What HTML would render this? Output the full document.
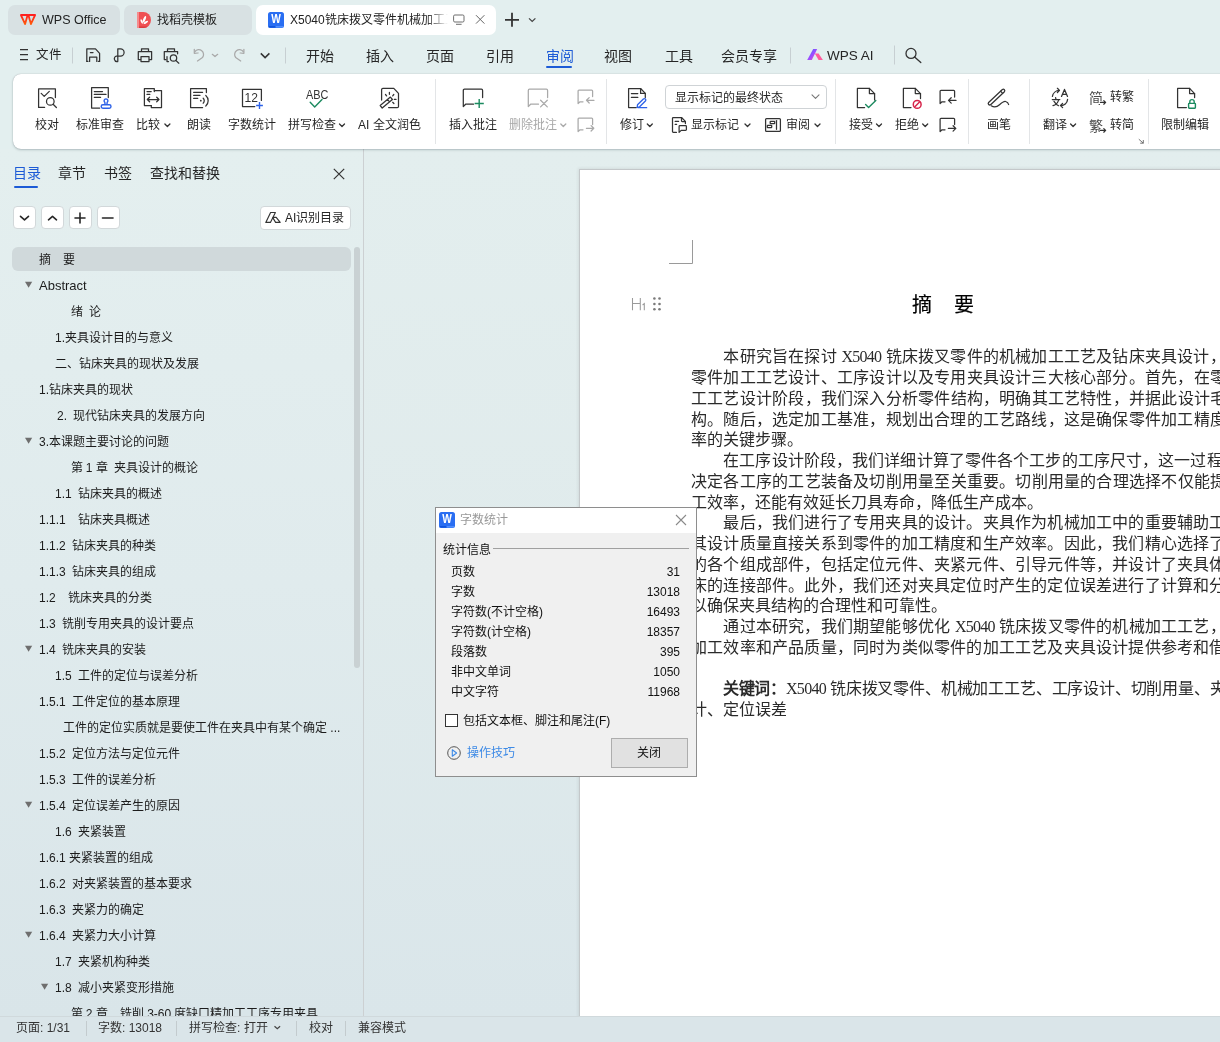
<!DOCTYPE html>
<html lang="zh-CN">
<head>
<meta charset="utf-8">
<style>
*{box-sizing:border-box;margin:0;padding:0}
html,body{width:1220px;height:1042px;overflow:hidden}
body{position:relative;will-change:transform;background:#e3efef;font-family:"Liberation Sans",sans-serif;color:#222;font-size:12px}
.a{position:absolute;white-space:nowrap}
.tab{position:absolute;top:5px;height:30px;border-radius:7px;background:#d8e1e3}
.tabt{position:absolute;top:5px;line-height:30px;font-size:12px;color:#222;white-space:nowrap}
.mi{position:absolute;top:41px;line-height:31px;font-size:14px;color:#262626;white-space:nowrap}
#ribbon{position:absolute;left:13px;top:74px;width:1240px;height:75px;background:#fff;border-radius:8px;box-shadow:0 1px 2.5px rgba(0,30,40,.22),0 0 1px rgba(0,20,30,.32)}
.rl{position:absolute;top:116px;line-height:18px;font-size:12px;color:#262626;white-space:nowrap}
.gr{color:#a8a8a8}
.sep{position:absolute;top:79px;width:1px;height:65px;background:#e3e5e7}
#nav{position:absolute;left:0;top:149px;width:363px;height:867px;background:linear-gradient(180deg,#e4efef 0%,#e0ebed 50%,#d9e5e9 100%)}
.toc{position:absolute;line-height:26px;font-size:12px;color:#1c1c1c;white-space:nowrap}
.nb{position:absolute;top:206px;width:23px;height:23px;background:#fff;border:1px solid #d2d8da;border-radius:4px}
#doc{position:absolute;left:364px;top:149px;width:856px;height:867px;background:linear-gradient(180deg,#e3eeee 0%,#e0ebec 50%,#dae6ea 100%)}
#page{position:absolute;left:579px;top:169px;width:700px;height:900px;background:#fff;border-left:1px solid #c4c8ca;border-top:1px solid #c4c8ca;box-shadow:-1px -1px 3px rgba(0,0,0,.07)}
.ln{position:absolute;left:691px;font-family:"Liberation Serif",serif;font-size:16px;line-height:20px;color:#2a2a2a;white-space:nowrap}
.lx{letter-spacing:-0.75px;margin-left:0.5px}
.lx0{letter-spacing:-0.7px}
#dlg{position:absolute;left:435px;top:507px;width:262px;height:270px;background:#f0f0f0;border:1px solid #8e8e8e}
.dr{position:absolute;left:451px;font-size:12px;line-height:20px;color:#111;white-space:nowrap}
.dn{position:absolute;left:600px;width:80px;font-size:12px;line-height:20px;color:#111;text-align:right}
#status{position:absolute;left:0;top:1016px;width:1220px;height:26px;background:#dae5e9;border-top:1px solid #d0d9dc}
.st{position:absolute;top:1016px;line-height:25px;font-size:12px;color:#333;white-space:nowrap}
.ssep{position:absolute;top:1021px;width:1px;height:15px;background:#c3cbce}
svg.ov{position:absolute;left:0;top:0;width:1220px;height:1042px;overflow:visible}
.k{fill:none;stroke:#333;stroke-width:1.25;stroke-linecap:round;stroke-linejoin:round}
.g{fill:none;stroke:#a9a9a9;stroke-width:1.25;stroke-linecap:round;stroke-linejoin:round}
</style>
</head>
<body>
<!-- TAB BAR -->
<div class="tab" style="left:8px;width:112px"></div>
<div class="tab" style="left:124px;width:128px"></div>
<div class="tab" style="left:256px;width:240px;background:#fff"></div>
<div class="tabt" style="left:42px;font-size:12.5px">WPS Office</div>
<div class="tabt" style="left:157px">找稻壳模板</div>
<div class="tabt" style="left:290px;width:160px;overflow:hidden;-webkit-mask-image:linear-gradient(90deg,#000 0,#000 136px,transparent 158px)">X5040铣床拨叉零件机械加工工序专用夹具设计</div>
<svg class="ov" viewBox="0 0 1220 1042">
 <!-- WPS logo -->
 <defs>
  <linearGradient id="wg" x1="0" y1="0" x2="0" y2="1"><stop offset="0" stop-color="#ff1f1f"/><stop offset="1" stop-color="#ff5a0a"/></linearGradient>
  <linearGradient id="aig" x1="0" y1="0" x2="1" y2="1"><stop offset="0" stop-color="#3b6cff"/><stop offset=".55" stop-color="#a24bff"/><stop offset="1" stop-color="#ff5c8a"/></linearGradient>
 </defs>
 <path d="M20.9,15 L27.6,15 L25.1,24.1 Z M28.4,15 L35.1,15 L30.9,24.1 Z" fill="none" stroke="url(#wg)" stroke-width="1.8" stroke-linejoin="round"/>
 <!-- docer logo -->
 <path d="M137,12 L143.4,12 A7.6,8 0 0 1 143.4,28 L137,28 Z" fill="#ef5053"/>
 <clipPath id="dcl"><path d="M137,12 L143.4,12 A7.6,8 0 0 1 143.4,28 L137,28 Z"/></clipPath><rect x="137" y="26.5" width="15" height="2" fill="#dc3b3e" clip-path="url(#dcl)"/>
 <rect x="137" y="12" width="2" height="16" fill="#f68b8d"/>
 <ellipse cx="141.7" cy="21.5" rx="0.95" ry="2.3" transform="rotate(-22 141.7 21.5)" fill="#fff"/>
 <ellipse cx="144.4" cy="19.3" rx="1.15" ry="3.5" transform="rotate(22 144.4 19.3)" fill="#fff"/>
 <ellipse cx="145.8" cy="22.4" rx="1" ry="2.6" transform="rotate(58 145.8 22.4)" fill="#fff"/>
 <!-- W doc icon -->
 <rect x="268" y="12" width="16" height="16" rx="2.5" fill="#2a6ef2"/>
 <text x="276" y="23.2" font-family="Liberation Sans" font-weight="bold" font-size="12.5" fill="#fff" text-anchor="middle" textLength="9.6" lengthAdjust="spacingAndGlyphs">W</text>
 <rect x="268.6" y="26.2" width="7" height="1.3" fill="#0a4fd8"/>
 <rect x="275.6" y="26.2" width="7.6" height="1.3" fill="#5a97ff"/>
 <!-- monitor -->
 <rect x="453.6" y="15" width="10.4" height="7" rx="1.2" fill="none" stroke="#666" stroke-width="0.95"/>
 <path d="M456,24.3 L461.6,24.3" stroke="#666" stroke-width="0.95"/>
 <!-- close -->
 <path d="M476,15.2 L484.4,23.6 M484.4,15.2 L476,23.6" stroke="#666" stroke-width="1"/>
 <!-- plus -->
 <path d="M505,19.8 L519,19.8 M512,12.8 L512,26.8" stroke="#333" stroke-width="1.8"/>
 <path d="M529,18.4 L532.2,21.4 L535.4,18.4" fill="none" stroke="#444" stroke-width="1.3"/>

 <!-- menu row -->
 <path d="M20,49.6 L28,49.6 M20,54.6 L28,54.6 M20,59.6 L28,59.6" stroke="#333" stroke-width="1.1"/>
 <path d="M72.5,47.5 L72.5,63.5" stroke="#c7cfd2" stroke-width="1"/>
 <!-- save -->
 <path d="M86.8,61.3 L86.8,48.8 L95.5,48.8 L99.6,53.3 L99.6,61.3" class="k" stroke-width="1.3"/>
 <path d="M89.6,61.4 L89.6,57.2 L96.8,57.2 L96.8,61.4 M86.8,61.3 L88,61.3 M98.4,61.3 L99.6,61.3" class="k" stroke-width="1.3"/>
 <path d="M90.4,52.5 L93,52.5" class="k" stroke-width="1.3"/>
 <!-- share -->
 <path d="M117.8,61.5 L117.8,48.8 L120.5,48.8 A3.6,3.6 0 0 1 120.5,56 L116.5,56 A2.7,2.7 0 1 0 117.8,61.5" class="k" stroke-width="1.3"/>
 <!-- print -->
 <path d="M141.5,51.2 L141.5,48.8 L148.5,48.8 L148.5,51.2" class="k" stroke-width="1.3"/>
 <path d="M140.5,59.5 L138.3,59.5 L138.3,51.5 L151.6,51.5 L151.6,59.5 L149.5,59.5" class="k" stroke-width="1.3"/>
 <path d="M141,56.5 L149,56.5 L149,61.5 L141,61.5 Z" class="k" stroke-width="1.3"/>
 <!-- print preview -->
 <path d="M167.5,51.2 L167.5,48.8 L174.5,48.8 L174.5,51.2" class="k" stroke-width="1.3"/>
 <path d="M166,59.5 L164.3,59.5 L164.3,51.5 L177.6,51.5 L177.6,53.8" class="k" stroke-width="1.3"/>
 <path d="M167,56.6 L167,61.5 L168.5,61.5" class="k" stroke-width="1.3"/>
 <circle cx="173.5" cy="58" r="3.2" class="k" stroke-width="1.3"/>
 <path d="M175.8,60.4 L178.8,63.2" class="k" stroke-width="1.3"/>
 <!-- undo/redo -->
 <path d="M195,51.5 A4.8,4.8 0 1 1 202.5,57.5 L197.5,61" class="g" stroke-width="1.2"/>
 <path d="M194.3,49.3 L194.3,53.3 L198,53" class="g" stroke-width="1.2"/>
 <path d="M212.3,54.3 L215,56.6 L217.7,54.3" class="g" stroke-width="1.2"/>
 <path d="M243.2,51.5 A4.8,4.8 0 1 0 235.7,57.5 L240.7,61" class="g" stroke-width="1.2"/>
 <path d="M243.9,49.3 L243.9,53.3 L240.2,53" class="g" stroke-width="1.2"/>
 <path d="M260.8,53.4 L265.1,57.6 L269.4,53.4" fill="none" stroke="#333" stroke-width="1.5"/>
 <path d="M285.5,47.5 L285.5,63.5" stroke="#c7cfd2" stroke-width="1"/>
 <path d="M790.5,47.5 L790.5,63.5" stroke="#c7cfd2" stroke-width="1"/>
 <path d="M894.5,45.5 L894.5,64.5" stroke="#c7cfd2" stroke-width="1"/>
 <!-- WPS AI logo -->
 <path d="M807.2,60 L813.2,49 L817.2,49 L811.8,60 Z" fill="url(#aig)"/>
 <path d="M814.8,53.5 L818.6,53.5 L822.9,60 L818.6,60 Z" fill="#ff5c9c"/>
 <!-- search -->
 <circle cx="911" cy="53.4" r="5" fill="none" stroke="#333" stroke-width="1.3"/>
 <path d="M914.6,57 L920.8,62.6" stroke="#333" stroke-width="1.3" stroke-linecap="round"/>
</svg>

<!-- MENU ROW -->
<div class="mi" style="left:36px;font-size:12.5px;top:40px">文件</div>
<div class="mi" style="left:306px">开始</div>
<div class="mi" style="left:366px">插入</div>
<div class="mi" style="left:426px">页面</div>
<div class="mi" style="left:486px">引用</div>
<div class="mi" style="left:546px;color:#1d5bd6">审阅</div>
<div class="a" style="left:546px;top:66px;width:26px;height:2.4px;background:#1d5bd6;border-radius:1px"></div>
<div class="mi" style="left:604px">视图</div>
<div class="mi" style="left:665px">工具</div>
<div class="mi" style="left:721px">会员专享</div>
<div class="mi" style="left:827px;font-size:13.5px;top:40px">WPS AI</div>
<!-- NAV -->
<div id="nav"></div>
<div class="a" style="left:363px;top:149px;width:1px;height:867px;background:#ccd0d2"></div>
<div class="a" style="left:364px;top:149px;width:1px;height:867px;background:#eef3f4"></div>
<div class="a" style="left:13px;top:163px;line-height:20px;font-size:14px;color:#1d5bd6">目录</div>
<div class="a" style="left:14px;top:186px;width:24px;height:2px;background:#1d5bd6;border-radius:1px"></div>
<div class="a" style="left:58px;top:163px;line-height:20px;font-size:14px;color:#262626">章节</div>
<div class="a" style="left:104px;top:163px;line-height:20px;font-size:14px;color:#262626">书签</div>
<div class="a" style="left:150px;top:163px;line-height:20px;font-size:14px;color:#262626">查找和替换</div>
<div class="nb" style="left:13px"></div>
<div class="nb" style="left:41px"></div>
<div class="nb" style="left:68.5px"></div>
<div class="nb" style="left:96.5px"></div>
<div class="a" style="left:259.5px;top:206px;width:91px;height:24px;background:#fff;border:1px solid #d2d8da;border-radius:4px"></div>
<div class="a" style="left:285px;top:208px;line-height:20px;font-size:12px;color:#262626">AI识别目录</div>
<div class="a" style="left:12px;top:247px;width:339px;height:23.5px;background:#d0d9db;border-radius:6px"></div>
<div class="a" style="left:354px;top:247px;width:6px;height:421px;background:#c9d1d3;border-radius:3px"></div>
<div class="toc" style="left:39px;top:247px">摘　要</div>
<div class="toc" style="left:39px;top:273px"><span style="font-size:13px">Abstract</span></div>
<div class="toc" style="left:70.5px;top:299px">绪&nbsp;&nbsp;论</div>
<div class="toc" style="left:55px;top:325px">1.夹具设计目的与意义</div>
<div class="toc" style="left:54.5px;top:351px">二、钻床夹具的现状及发展</div>
<div class="toc" style="left:39px;top:377px">1.钻床夹具的现状</div>
<div class="toc" style="left:57px;top:403px">2.</div>
<div class="toc" style="left:73.2px;top:403px">现代钻床夹具的发展方向</div>
<div class="toc" style="left:39px;top:429px">3.本课题主要讨论的问题</div>
<div class="toc" style="left:70.5px;top:455px">第 1 章</div>
<div class="toc" style="left:113.5px;top:455px">夹具设计的概论</div>
<div class="toc" style="left:55px;top:481px">1.1</div>
<div class="toc" style="left:77.9px;top:481px">钻床夹具的概述</div>
<div class="toc" style="left:39px;top:507px">1.1.1</div>
<div class="toc" style="left:78px;top:507px">钻床夹具概述</div>
<div class="toc" style="left:39px;top:533px">1.1.2</div>
<div class="toc" style="left:71.5px;top:533px">钻床夹具的种类</div>
<div class="toc" style="left:39px;top:559px">1.1.3</div>
<div class="toc" style="left:71.5px;top:559px">钻床夹具的组成</div>
<div class="toc" style="left:39px;top:585px">1.2</div>
<div class="toc" style="left:68.2px;top:585px">铣床夹具的分类</div>
<div class="toc" style="left:39px;top:611px">1.3</div>
<div class="toc" style="left:62.1px;top:611px">铣削专用夹具的设计要点</div>
<div class="toc" style="left:39px;top:637px">1.4</div>
<div class="toc" style="left:62.1px;top:637px">铣床夹具的安装</div>
<div class="toc" style="left:55px;top:663px">1.5</div>
<div class="toc" style="left:77.9px;top:663px">工件的定位与误差分析</div>
<div class="toc" style="left:39px;top:689px">1.5.1</div>
<div class="toc" style="left:71.5px;top:689px">工件定位的基本原理</div>
<div class="toc" style="left:63px;top:715px">工件的定位实质就是要使工件在夹具中有某个确定 ...</div>
<div class="toc" style="left:39px;top:741px">1.5.2</div>
<div class="toc" style="left:71.5px;top:741px">定位方法与定位元件</div>
<div class="toc" style="left:39px;top:767px">1.5.3</div>
<div class="toc" style="left:71.5px;top:767px">工件的误差分析</div>
<div class="toc" style="left:39px;top:793px">1.5.4</div>
<div class="toc" style="left:71.5px;top:793px">定位误差产生的原因</div>
<div class="toc" style="left:55px;top:819px">1.6</div>
<div class="toc" style="left:77.9px;top:819px">夹紧装置</div>
<div class="toc" style="left:39px;top:845px">1.6.1</div>
<div class="toc" style="left:69.2px;top:845px">夹紧装置的组成</div>
<div class="toc" style="left:39px;top:871px">1.6.2</div>
<div class="toc" style="left:71.9px;top:871px">对夹紧装置的基本要求</div>
<div class="toc" style="left:39px;top:897px">1.6.3</div>
<div class="toc" style="left:71.9px;top:897px">夹紧力的确定</div>
<div class="toc" style="left:39px;top:923px">1.6.4</div>
<div class="toc" style="left:71.9px;top:923px">夹紧力大小计算</div>
<div class="toc" style="left:55px;top:949px">1.7</div>
<div class="toc" style="left:78px;top:949px">夹紧机构种类</div>
<div class="toc" style="left:55px;top:975px">1.8</div>
<div class="toc" style="left:78px;top:975px">减小夹紧变形措施</div>
<div class="toc" style="left:70.5px;top:1001px">第 2 章</div>
<div class="toc" style="left:119.8px;top:1001px">铣削 3-60 度缺口精加工工序专用夹具</div>
<svg class="ov" viewBox="0 0 1220 1042">
<path d="M25,281.8 L32.2,281.8 L28.6,287.8 Z" fill="#6e6e6e"/>
<path d="M25,437.8 L32.2,437.8 L28.6,443.8 Z" fill="#6e6e6e"/>
<path d="M25,645.8 L32.2,645.8 L28.6,651.8 Z" fill="#6e6e6e"/>
<path d="M25,801.8 L32.2,801.8 L28.6,807.8 Z" fill="#6e6e6e"/>
<path d="M25,931.8 L32.2,931.8 L28.6,937.8 Z" fill="#6e6e6e"/>
<path d="M41,983.8 L48.2,983.8 L44.6,989.8 Z" fill="#6e6e6e"/>
<g fill="none" stroke="#262626" stroke-width="1.6" stroke-linecap="round" stroke-linejoin="round">
<path d="M20.5,216.3 L24.5,219.8 L28.5,216.3"/>
<path d="M48.5,219.8 L52.5,216.3 L56.5,219.8"/>
<path d="M75,218 L85,218 M80,213 L80,223"/>
<path d="M102.5,218 L113,218"/>
</g>
<path d="M333.8,168.8 L344.2,179.2 M344.2,168.8 L333.8,179.2" stroke="#333" stroke-width="1.2"/>
<path d="M265.8,222.4 L270.6,212.5 L275.4,212.5 L270.4,222.4 Z M272.6,217.4 L276.2,217.4 L280.2,222.4 L275.6,222.4 Z" fill="none" stroke="#333" stroke-width="1.15" stroke-linejoin="round"/>
</svg>
<!-- DOC -->
<div id="doc"></div>
<div id="page"></div>
<svg class="ov" viewBox="0 0 1220 1042">
<path d="M692.5,240 L692.5,263.5 L669,263.5" fill="none" stroke="#9a9a9a" stroke-width="1"/>
<path d="M632.5,298 L632.5,310.3 M640.3,298 L640.3,310.3 M632.5,303.5 L640.3,303.5 M642.6,305 L644.3,303.6 L644.3,310.3" fill="none" stroke="#9a9a9a" stroke-width="1.05"/>
<circle cx="654.4" cy="298.5" r="1.3" fill="#7a7a7a"/>
<circle cx="654.4" cy="304" r="1.3" fill="#7a7a7a"/>
<circle cx="654.4" cy="309.3" r="1.3" fill="#7a7a7a"/>
<circle cx="659.5" cy="298.5" r="1.3" fill="#7a7a7a"/>
<circle cx="659.5" cy="304" r="1.3" fill="#7a7a7a"/>
<circle cx="659.5" cy="309.3" r="1.3" fill="#7a7a7a"/>
</svg>
<div class="a" style="left:912px;top:293px;font-family:'Liberation Serif',serif;font-size:20px;line-height:24px;color:#000;-webkit-text-stroke:0.2px #000">摘</div>
<div class="a" style="left:954px;top:293px;font-family:'Liberation Serif',serif;font-size:20px;line-height:24px;color:#000;-webkit-text-stroke:0.2px #000">要</div>
<div class="ln" style="top:347.250px;letter-spacing:0.2px">　　本研究旨在探讨 <span class="lx">X5040</span> 铣床拨叉零件的机械加工工艺及钻床夹具设计，涵盖了</div>
<div class="ln" style="top:368.000px;letter-spacing:0.21px">零件加工工艺设计、工序设计以及专用夹具设计三大核心部分。首先，在零件加</div>
<div class="ln" style="top:388.750px;letter-spacing:0.22px">工工艺设计阶段，我们深入分析零件结构，明确其工艺特性，并据此设计毛坯结</div>
<div class="ln" style="top:409.500px;letter-spacing:0.21px">构。随后，选定加工基准，规划出合理的工艺路线，这是确保零件加工精度和效</div>
<div class="ln" style="top:430.250px;letter-spacing:0px">率的关键步骤。</div>
<div class="ln" style="top:451.000px;letter-spacing:0.11px">　　在工序设计阶段，我们详细计算了零件各个工步的工序尺寸，这一过程对于</div>
<div class="ln" style="top:471.750px;letter-spacing:0.22px">决定各工序的工艺装备及切削用量至关重要。切削用量的合理选择不仅能提高加</div>
<div class="ln" style="top:492.500px;letter-spacing:0px">工效率，还能有效延长刀具寿命，降低生产成本。</div>
<div class="ln" style="top:513.250px;letter-spacing:0.2px">　　最后，我们进行了专用夹具的设计。夹具作为机械加工中的重要辅助工具，</div>
<div class="ln" style="top:534.000px;letter-spacing:0.2px">其设计质量直接关系到零件的加工精度和生产效率。因此，我们精心选择了夹具</div>
<div class="ln" style="top:554.750px;letter-spacing:0.2px">的各个组成部件，包括定位元件、夹紧元件、引导元件等，并设计了夹具体与机</div>
<div class="ln" style="top:575.500px;letter-spacing:0.2px">床的连接部件。此外，我们还对夹具定位时产生的定位误差进行了计算和分析，</div>
<div class="ln" style="top:596.250px;letter-spacing:0px">以确保夹具结构的合理性和可靠性。</div>
<div class="ln" style="top:617.000px;letter-spacing:0.2px">　　通过本研究，我们期望能够优化 <span class="lx">X5040</span> 铣床拨叉零件的机械加工工艺，提高</div>
<div class="ln" style="top:637.750px;letter-spacing:0.2px">加工效率和产品质量，同时为类似零件的加工工艺及夹具设计提供参考和借鉴。</div>
<div class="ln" style="top:679.250px;letter-spacing:-0.17px">　　<b>关键词：</b><span class="lx0">X5040</span> 铣床拨叉零件、机械加工工艺、工序设计、切削用量、夹具设</div>
<div class="ln" style="top:700.000px;letter-spacing:0px">计、定位误差</div>
<!-- RIBBON -->
<div id="ribbon"></div>
<div class="sep" style="left:435px"></div>
<div class="sep" style="left:606px"></div>
<div class="sep" style="left:835px"></div>
<div class="sep" style="left:968px"></div>
<div class="sep" style="left:1029px"></div>
<div class="sep" style="left:1148px"></div>
<div class="rl" style="left:35px">校对</div>
<div class="rl" style="left:76px">标准审查</div>
<div class="rl" style="left:136px">比较</div>
<div class="rl" style="left:187px">朗读</div>
<div class="rl" style="left:228px">字数统计</div>
<div class="rl" style="left:288px">拼写检查</div>
<div class="rl" style="left:358px">AI 全文润色</div>
<div class="rl" style="left:449px">插入批注</div>
<div class="rl gr" style="left:509px">删除批注</div>
<div class="rl" style="left:620px">修订</div>
<div class="a" style="left:665px;top:85px;width:162px;height:24px;border:1px solid #cfd3d6;border-radius:4px;background:#fff"></div>
<div class="rl" style="left:675px;top:89px">显示标记的最终状态</div>
<div class="rl" style="left:691px">显示标记</div>
<div class="rl" style="left:786px">审阅</div>
<div class="rl" style="left:849px">接受</div>
<div class="rl" style="left:895px">拒绝</div>
<div class="rl" style="left:987px">画笔</div>
<div class="rl" style="left:1043px">翻译</div>
<div class="rl" style="left:1110px;top:88px">转繁</div>
<div class="rl" style="left:1110px">转简</div>
<div class="rl" style="left:1161px">限制编辑</div>
<svg class="ov" viewBox="0 0 1220 1042">
 <!-- chevrons -->
 <g fill="none" stroke="#333" stroke-width="1.3" stroke-linecap="round" stroke-linejoin="round">
  <path d="M164.9,124 L167.4,126.5 L169.9,124"/>
  <path d="M339.5,124 L342.0,126.5 L344.5,124"/>
  <path d="M647.3,124 L649.8,126.5 L652.3,124"/>
  <path d="M745.0,124 L747.5,126.5 L750.0,124"/>
  <path d="M815.0,124 L817.5,126.5 L820.0,124"/>
  <path d="M876.5,124 L879.0,126.5 L881.5,124"/>
  <path d="M922.7,124 L925.2,126.5 L927.7,124"/>
  <path d="M1070.6,124 L1073.1,126.5 L1075.6,124"/>
  <path d="M812,94.8 L815.5,98.3 L819,94.8" stroke="#777" stroke-width="1.1"/>
 </g>
 <path d="M560.8,124 L563.3,126.5 L565.8,124" fill="none" stroke="#aaa" stroke-width="1.3" stroke-linecap="round" stroke-linejoin="round"/>
 <!-- 校对 -->
 <g class="k">
  <path d="M44.6,107.4 L38.6,107.4 L38.6,88.8 L55.4,88.8 L55.4,97.6"/>
  <path d="M41.2,93.4 L44.2,96.4 L49.3,91.4"/>
  <circle cx="50.3" cy="101.4" r="3.8"/>
  <path d="M53.1,104.2 L56.4,107.5"/>
 </g>
 <!-- 标准审查 -->
 <g class="k">
  <path d="M99.7,108 L91.6,108 L91.6,87.6 L108.3,87.6 L108.3,97.6"/>
  <path d="M94.3,91.5 L102.5,91.5 M94.3,94.4 L106,94.4 M94.3,97.3 L100.6,97.3"/>
 </g>
 <g fill="none" stroke="#2d62e8" stroke-width="1.4" stroke-linejoin="round">
  <path d="M105.1,104.6 L104.8,102.2 A1.9,1.9 0 1 1 107.2,102.2 L106.9,104.6"/>
  <rect x="101.2" y="104.8" width="9.8" height="3.4" rx="1.7"/>
 </g>
 <!-- 比较 -->
 <g class="k">
  <path d="M151.3,105.6 L144.4,105.6 L144.4,88.5 L154.3,88.5 L154.3,91.6"/>
  <path d="M154.3,90.6 L161.5,90.6 L161.5,107.5 L151.3,107.5 L151.3,105.6"/>
  <path d="M147,91.5 L151.2,91.5 M147,94.4 L149.8,94.4"/>
  <path d="M147.3,99.5 L159,99.5 M149.6,97.2 L147.3,99.5 L149.6,101.8 M156.7,97.2 L159,99.5 L156.7,101.8"/>
 </g>
 <!-- 朗读 -->
 <g class="k">
  <path d="M202.6,107.5 L190.6,107.5 L190.6,88.5 L206.4,88.5 L206.4,92.6"/>
  <path d="M193.6,92.3 L202.6,92.3 M193.6,95.3 L200,95.3 M193.6,98.3 L197.8,98.3"/>
  <path d="M203.2,98.2 A3.5,3.5 0 0 1 203.2,103.2 M205.8,95.5 A7,7 0 0 1 205.8,106"/>
 </g>
 <circle cx="200.8" cy="100.7" r="0.9" fill="#333"/>
 <!-- 字数统计 -->
 <g class="k">
  <path d="M254.8,106.5 L242.5,106.5 L242.5,89.4 L261.4,89.4 L261.4,100.4"/>
 </g>
 <text x="244.6" y="102" font-family="Liberation Sans" font-size="12.5" fill="#333" textLength="13.4" lengthAdjust="spacingAndGlyphs">12</text>
 <path d="M256.1,105.5 L262.9,105.5 M259.5,102.1 L259.5,108.9" stroke="#2d62e8" stroke-width="1.4"/>
 <!-- ABC -->
 <text x="306" y="98.8" font-family="Liberation Sans" font-size="12.6" fill="#333" textLength="22.4" lengthAdjust="spacingAndGlyphs">ABC</text>
 <path d="M310.2,102.2 L314.7,107 L322,99.6" fill="none" stroke="#1b8a5f" stroke-width="1.4" stroke-linecap="round" stroke-linejoin="round"/>
 <!-- AI 全文润色 -->
 <g class="k">
  <path d="M381.6,100 L381.6,89.6 A1.3,1.3 0 0 1 382.9,88.4 L393.8,88.4 L398.5,93.4 L398.5,106.4 A1.2,1.2 0 0 1 397.3,107.6 L388.6,107.6"/>
  <path d="M380.2,105.6 L390.4,97.1 L392.4,99.5 L382.2,108 Z M387.5,99.45 L389.6,101.9"/>
  <path d="M389.4,92.4 L389.4,94.3 M385.5,94.5 L386.6,95.9 M393.8,94.5 L392.7,95.9 M394.3,99.4 L396,99.4 M392.7,102.3 L393.9,103.5"/>
 </g>
 <!-- 插入批注 -->
 <g class="k">
  <path d="M482.6,97.6 L482.6,90.4 A1.2,1.2 0 0 0 481.4,89.2 L464.5,89.2 A1.2,1.2 0 0 0 463.3,90.4 L463.3,106.6 L465.6,104.2 L473.5,104.2"/>
 </g>
 <path d="M474.6,103.5 L483.8,103.5 M479.2,98.9 L479.2,108.1" stroke="#1b8a5f" stroke-width="1.4"/>
 <!-- 删除批注 gray -->
 <g class="g">
  <path d="M547.6,97.6 L547.6,90.4 A1.2,1.2 0 0 0 546.4,89.2 L529.5,89.2 A1.2,1.2 0 0 0 528.3,90.4 L528.3,106.6 L530.6,104.2 L538.5,104.2"/>
  <path d="M540.6,100.2 L547.3,106.9 M547.3,100.2 L540.6,106.9"/>
 </g>
 <!-- prev/next small (gray) -->
 <g class="g" stroke-width="1.2">
  <path d="M592.6,96.5 L592.6,91 A0.9,0.9 0 0 0 591.7,90.1 L579,90.1 A0.9,0.9 0 0 0 578.1,91 L578.1,103.6 L580,101.8 L583,101.8"/>
  <path d="M586.6,100.3 L594,100.3 M589.2,97.6 L586.5,100.3 L589.2,103"/>
  <path d="M592.6,124.5 L592.6,119 A0.9,0.9 0 0 0 591.7,118.1 L579,118.1 A0.9,0.9 0 0 0 578.1,119 L578.1,131.6 L580,129.8 L583,129.8"/>
  <path d="M586.4,128.3 L593.8,128.3 M591.1,125.6 L593.8,128.3 L591.1,131"/>
 </g>
 <!-- 修订 -->
 <g class="k">
  <path d="M636.3,107.6 L628.6,107.6 L628.6,88.5 L640.6,88.5 L645.3,93.4 L645.3,97.6"/>
  <path d="M640.6,88.5 L640.6,93.4 L645.3,93.4"/>
  <path d="M631.4,93.6 L637.8,93.6 M631.4,97.4 L637.8,97.4"/>
 </g>
 <path d="M637.2,107.4 L637.5,104.8 L643.4,99 A1.35,1.35 0 0 1 645.4,101 L639.6,106.8 Z M637.5,107.6 L647.2,107.6" fill="none" stroke="#2d62e8" stroke-width="1.3" stroke-linejoin="round"/>
 <!-- 显示标记 icon -->
 <g class="k" stroke-width="1.15">
  <path d="M676.4,132.4 L673.3,132.4 A0.8,0.8 0 0 1 672.5,131.6 L672.5,118.3 A0.8,0.8 0 0 1 673.3,117.5 L681.5,117.5 L685.4,121.4 L685.4,123.5"/>
  <path d="M681.5,117.5 L681.5,120.8 A0.7,0.7 0 0 0 682.2,121.5 L685.2,121.5"/>
  <path d="M675.2,121.4 L678.6,121.4 M675.2,124.4 L676.6,124.4"/>
  <path d="M679.1,132.4 L679.1,126.4 A0.8,0.8 0 0 1 679.9,125.6 L685.6,125.6 A0.8,0.8 0 0 1 686.4,126.4 L686.4,129.6 A0.8,0.8 0 0 1 685.6,130.4 L681.2,130.4 Z"/>
 </g>
 <!-- 审阅 icon -->
 <g class="k" stroke-width="1.15">
  <rect x="765.6" y="118.5" width="14.8" height="12.9" rx="0.9"/>
  <rect x="770.2" y="121.3" width="4.5" height="2.3" rx="0.4"/>
  <rect x="767.3" y="125.3" width="4.4" height="2.3" rx="0.4"/>
  <path d="M776.5,120.6 L776.5,129.3"/>
 </g>
 <!-- 接受 -->
 <g class="k">
  <path d="M864.6,107.6 L857.4,107.6 L857.4,88.4 L869.4,88.4 L874.6,93.6 L874.6,100"/>
  <path d="M869.4,88.4 L869.4,93.6 L874.6,93.6"/>
 </g>
 <path d="M865.6,104.6 L868.6,107.6 L875.8,100.6" fill="none" stroke="#1b8a5f" stroke-width="1.4" stroke-linecap="round" stroke-linejoin="round"/>
 <!-- 拒绝 -->
 <g class="k">
  <path d="M911,107.6 L903.4,107.6 L903.4,88.4 L915.3,88.4 L920.5,93.6 L920.5,98.6"/>
  <path d="M915.3,88.4 L915.3,93.6 L920.5,93.6"/>
 </g>
 <circle cx="917.2" cy="104.4" r="3.9" fill="none" stroke="#d7244a" stroke-width="1.5"/>
 <path d="M914.6,107 L919.8,101.8" stroke="#d7244a" stroke-width="1.5"/>
 <!-- prev/next dark -->
 <g class="k" stroke-width="1.2">
  <path d="M954.6,97 L954.6,91.3 A0.9,0.9 0 0 0 953.7,90.4 L941,90.4 A0.9,0.9 0 0 0 940.1,91.3 L940.1,103.6 L942,101.8 L945,101.8"/>
  <path d="M948.6,100.4 L956,100.4 M951.2,97.7 L948.5,100.4 L951.2,103.1"/>
  <path d="M954.6,124.6 L954.6,119.3 A0.9,0.9 0 0 0 953.7,118.4 L941,118.4 A0.9,0.9 0 0 0 940.1,119.3 L940.1,131.6 L942,129.8 L945,129.8"/>
  <path d="M948.4,128.4 L955.8,128.4 M953.1,125.7 L955.8,128.4 L953.1,131.1"/>
 </g>
 <!-- 画笔 -->
 <g class="k" stroke-width="1.2">
  <path d="M988.6,102.5 L1002.4,89.5 A1.5,1.5 0 0 1 1004.4,91.7 L990.6,104.7 A1.5,1.5 0 0 1 988.6,102.5 Z"/>
  <path d="M1000.6,91.2 L1002.6,93.4"/>
  <path d="M991.2,105.8 C993.5,107.3 997,107.1 999.5,104.8 C1002,102.5 1003.6,101.1 1005.6,101.5 C1007.3,101.9 1008.4,103.5 1008.6,104.5"/>
 </g>
 <!-- 翻译 icon -->
 <g class="k" stroke-width="1.15">
  <path d="M1052.4,96.4 A7.2,7.2 0 0 1 1059.4,90.4 M1057.4,88.3 L1059.5,90.4 L1057.4,92.5"/>
  <path d="M1067.6,99.4 A6.6,6.6 0 0 1 1060.5,105.5 M1062.6,103.4 L1060.5,105.5 L1062.6,107.6"/>
  <path d="M1061.5,96.4 L1064.5,89.4 L1067.5,96.4 M1062.5,94.3 L1066.5,94.3"/>
  <path d="M1052.3,99.5 L1059.8,99.5 M1055.6,97.6 L1055.9,99.2 M1058.4,100.6 C1057.4,103.4 1055.6,105 1053,105.7 M1054,101.4 C1055.4,103.6 1057,105 1058.6,105.7"/>
 </g>
 <!-- 简/繁 icons -->
 <text x="1089.2" y="102.6" font-family="Liberation Sans" font-size="14" fill="#4a4a4a">简</text>
 <text x="1089.2" y="130.8" font-family="Liberation Sans" font-size="14" fill="#4a4a4a">繁</text>
 <rect x="1100" y="101" width="7" height="4" fill="#fff"/>
 <rect x="1100" y="129" width="7" height="4" fill="#fff"/>
 <g class="k" stroke-width="1.1">
  <path d="M1100.4,102.4 L1105.6,102.4 M1103.8,100.6 L1105.6,102.4 L1103.8,104.2"/>
  <path d="M1100.4,130.4 L1105.6,130.4 M1103.8,128.6 L1105.6,130.4 L1103.8,132.2"/>
 </g>
 <path d="M1138.8,139.2 L1143.3,143.2 M1143.3,140 L1143.3,143.2 L1140.2,143.2" fill="none" stroke="#666" stroke-width="0.9"/>
 <!-- 限制编辑 -->
 <g class="k">
  <path d="M1186.4,107.6 L1177.6,107.6 L1177.6,88.4 L1189.6,88.4 L1194.6,93.6 L1194.6,97.6"/>
  <path d="M1189.6,88.4 L1189.6,93.6 L1194.6,93.6"/>
 </g>
 <g fill="none" stroke="#1b8a5f" stroke-width="1.4">
  <path d="M1189.8,103 L1189.8,101.8 A2.2,2.2 0 0 1 1194.2,101.8 L1194.2,103"/>
  <rect x="1188.6" y="103.4" width="6.8" height="4.8" rx="0.6"/>
 </g>
</svg>
<!-- DIALOG -->
<div id="dlg"></div>
<div class="a" style="left:436px;top:508px;width:260px;height:25px;background:#fff"></div>
<div class="a" style="left:460px;top:509px;line-height:22px;font-size:12px;color:#999">字数统计</div>
<div class="a" style="left:443px;top:540px;line-height:20px;font-size:12px;color:#111">统计信息</div>
<div class="a" style="left:493px;top:548px;width:196px;height:1px;background:#a0a0a0"></div>
<div class="dr" style="top:562px">页数</div><div class="dn" style="top:562px">31</div>
<div class="dr" style="top:582px">字数</div><div class="dn" style="top:582px">13018</div>
<div class="dr" style="top:602px">字符数(不计空格)</div><div class="dn" style="top:602px">16493</div>
<div class="dr" style="top:622px">字符数(计空格)</div><div class="dn" style="top:622px">18357</div>
<div class="dr" style="top:642px">段落数</div><div class="dn" style="top:642px">395</div>
<div class="dr" style="top:662px">非中文单词</div><div class="dn" style="top:662px">1050</div>
<div class="dr" style="top:682px">中文字符</div><div class="dn" style="top:682px">11968</div>
<div class="a" style="left:445px;top:714px;width:13px;height:13px;background:#fff;border:1px solid #333"></div>
<div class="a" style="left:463px;top:711px;line-height:20px;font-size:12px;color:#111">包括文本框、脚注和尾注(F)</div>
<div class="a" style="left:467px;top:743px;line-height:20px;font-size:12px;color:#3d8ae6">操作技巧</div>
<div class="a" style="left:611px;top:738px;width:77px;height:30px;background:#e1e1e1;border:1px solid #adadad"></div>
<div class="a" style="left:637px;top:743px;line-height:20px;font-size:12px;color:#111">关闭</div>
<svg class="ov" viewBox="0 0 1220 1042">
 <rect x="439" y="512" width="16" height="16" rx="2.5" fill="#2a6ef2"/>
 <text x="447" y="523.2" font-family="Liberation Sans" font-weight="bold" font-size="12.5" fill="#fff" text-anchor="middle" textLength="9.6" lengthAdjust="spacingAndGlyphs">W</text>
 <rect x="439.6" y="526.2" width="7" height="1.3" fill="#0a4fd8"/>
 <rect x="446.6" y="526.2" width="7.6" height="1.3" fill="#5a97ff"/>
 <path d="M676,515 L686,525 M686,515 L676,525" stroke="#8a8a8a" stroke-width="1.1"/>
 <circle cx="454" cy="753" r="6.3" fill="none" stroke="#555" stroke-width="1"/>
 <path d="M452.3,749.8 L452.3,756.2 L456.6,753 Z" fill="none" stroke="#3d8ae6" stroke-width="1.1" stroke-linejoin="round"/>
</svg>
<!-- STATUS -->
<div id="status"></div>
<div class="st" style="left:16px">页面: 1/31</div>
<div class="ssep" style="left:86px"></div>
<div class="st" style="left:98px">字数: 13018</div>
<div class="ssep" style="left:176px"></div>
<div class="st" style="left:189px">拼写检查: 打开</div>
<div class="ssep" style="left:296px"></div>
<div class="st" style="left:309px">校对</div>
<div class="ssep" style="left:345px"></div>
<div class="st" style="left:358px">兼容模式</div>
<svg class="ov" viewBox="0 0 1220 1042"><path d="M274.5,1026.3 L277.3,1028.8 L280.1,1026.3" fill="none" stroke="#444" stroke-width="1.2"/></svg>
</body></html>
